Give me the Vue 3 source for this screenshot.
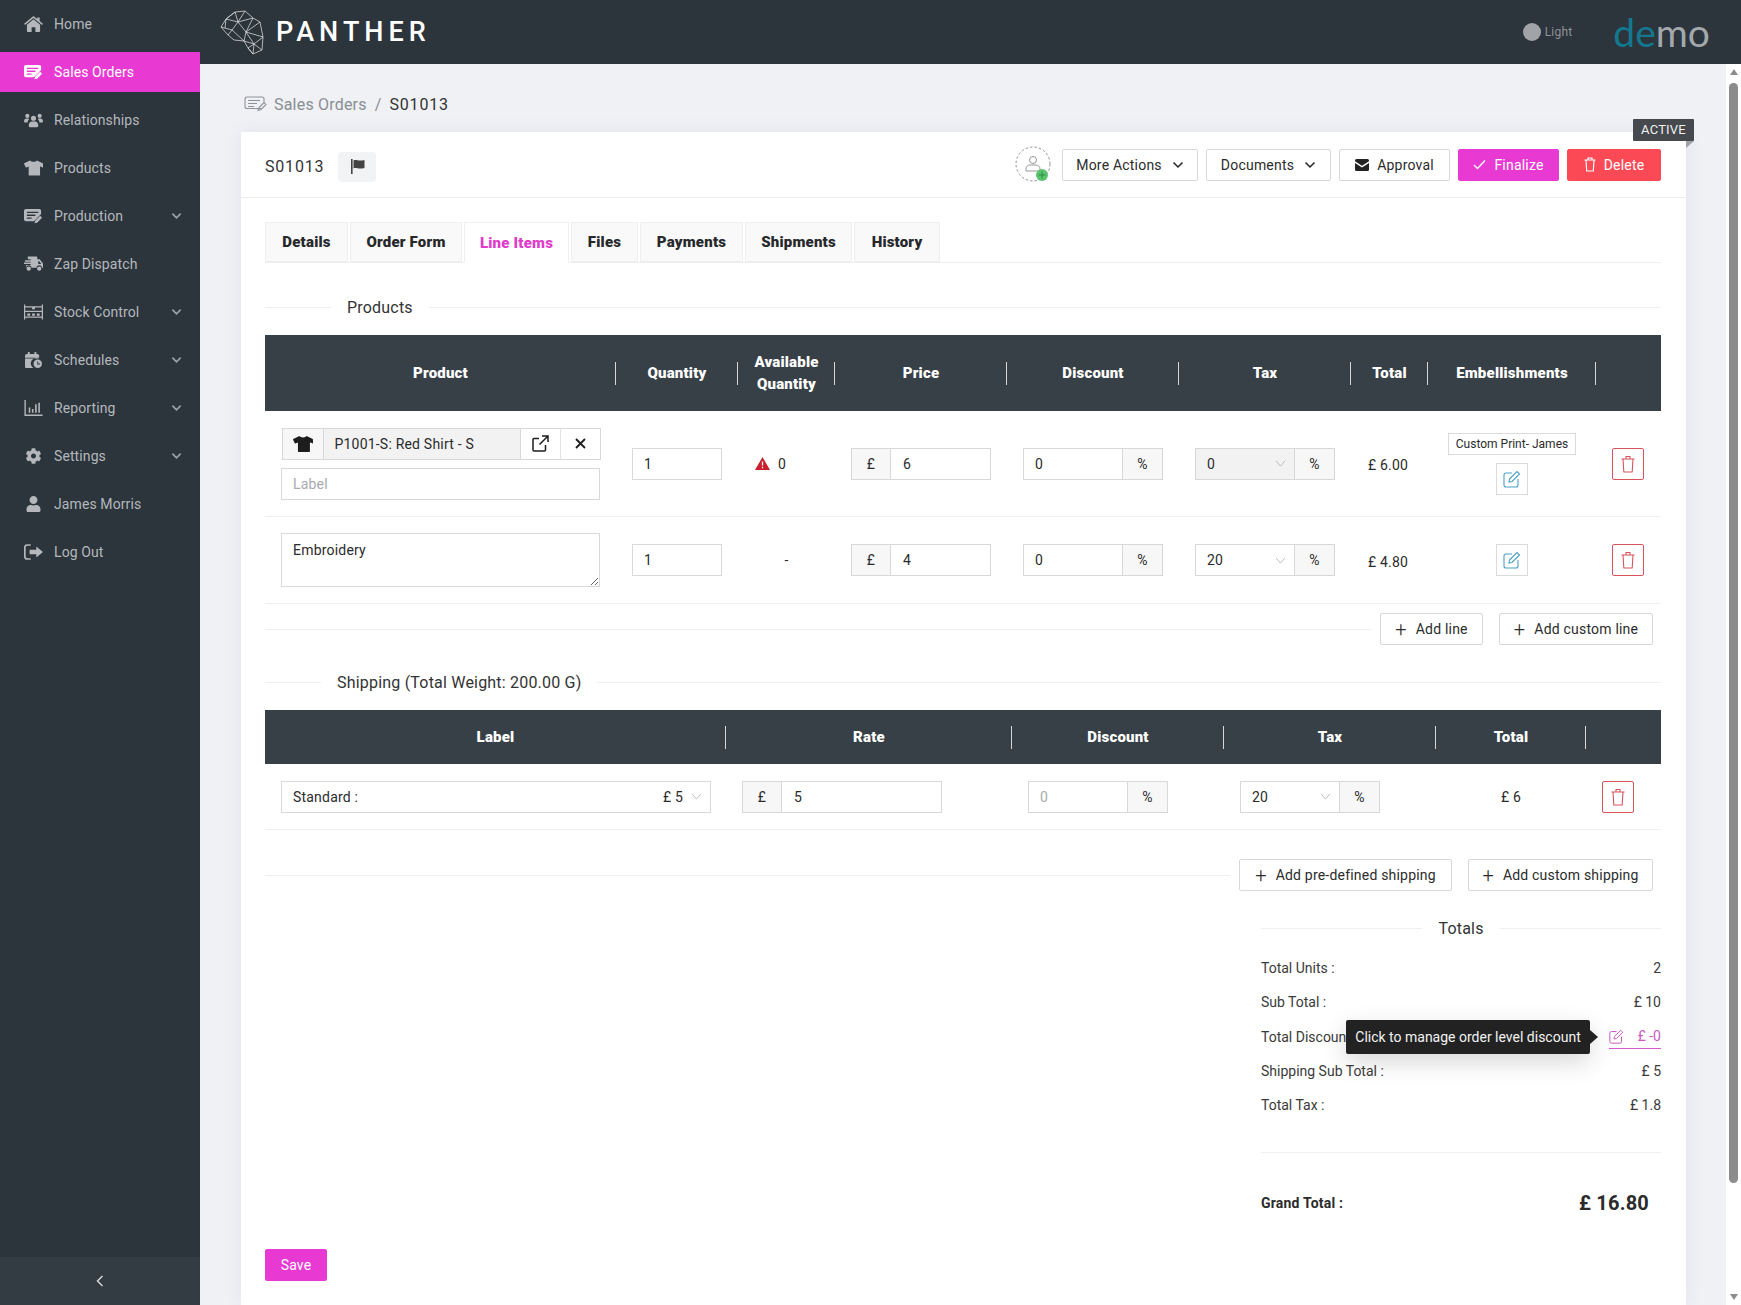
<template>
  <div class="app">
    <aside class="sidebar">
      <nav class="nav">
        <a v-for="item in navItems" :key="item.label" class="nav-item" :class="{ active: item.active }">
          <svg class="nav-icon" :viewBox="icons[item.icon].box"><path :d="icons[item.icon].d" fill="currentColor" fill-rule="evenodd" /></svg>
          <span class="nav-label">{{ item.label }}</span>
          <svg v-if="item.sub" class="nav-chevron" viewBox="0 0 12 8"><path d="M1.5 1.5 6 6l4.500-4.500" /></svg>
        </a>
      </nav>
      <div class="collapse-bar">
        <svg width="10" height="12" viewBox="0 0 10 12"><path d="M7.500 1 2.500 6l5 5" fill="none" stroke="#d5d8db" stroke-width="1.500" /></svg>
      </div>
    </aside>

    <div class="right">
      <header class="topbar">
        <div class="brand">
          <svg class="logo" width="44" height="45" viewBox="0 0 44 45" fill="none" stroke="#d4d6d8" stroke-width=".8">
            <path d="M1 17 6 9l9-7 10-1 8 7 7 4 3 15-1 13-9 4-5-6-4-7-10-1-6-5Z" />
            <path d="M15 2l3 10 7-11M18 12l15-4M6 9l12 3-6 8-11-3M12 20l-4 5M12 20l12 11M18 12l8 10-2 9M33 8l-7 14 14-10M26 22l17 5M26 22l8 12 9-7M34 34l8 6M34 34l-1 10M34 34l-6 4M24 31l10 3M6 9l-1 9M15 2 6 9M28 38l5 6" />
          </svg>
          <span class="brand-name">PANTHER</span>
        </div>
        <div class="top-right">
          <div class="theme-toggle"><i class="theme-dot"></i><span>Light</span></div>
          <div class="demo"><span class="demo-de">de</span>mo</div>
        </div>
      </header>

      <div class="body-row">
        <main class="content">
          <div class="breadcrumb">
            <svg width="23" height="16" viewBox="0 0 23 16" fill="none" stroke="#8f9397" stroke-width="1.100">
              <path d="M17 12.500H3a2 2 0 0 1-2-2V3a2 2 0 0 1 2-2h15a2 2 0 0 1 2 2v3" />
              <path d="M4 4.500h12M4 7.500h9M4 10.500h6M14 14.500l1-3 5-5 2 2-5 5Z" />
            </svg>
            <span class="crumb-link">Sales Orders</span>
            <span class="crumb-sep">/</span>
            <span class="crumb-current">S01013</span>
          </div>

          <section class="card">
            <div class="status-tag">ACTIVE</div>
            <div class="card-head">
              <div class="order-no">S01013</div>
              <button class="flag-btn">
                <svg width="15" height="15" viewBox="0 0 15 15"><path d="M1 0h1.600v15H1zM3.500 1.500C6 0 8 2.500 14.500 1v8C8 10.500 6 8 3.500 9.500z" fill="#444" /></svg>
              </button>
              <div class="head-actions">
                <svg class="avatar" width="36" height="38" viewBox="0 0 36 38" fill="none">
                  <circle cx="18" cy="18" r="17" stroke="#777" stroke-width=".8" stroke-dasharray="2.500 2" />
                  <circle cx="18" cy="14" r="3.500" stroke="#999" />
                  <path d="M11 25v-2c0-2.500 2-4 4-4h6c2 0 4 1.500 4 4v2Z" stroke="#999" />
                  <circle cx="27" cy="29" r="6" fill="#5ac46e" />
                  <path d="M27 25.500v7M23.500 29h7" stroke="#2d8f45" />
                </svg>
                <button class="btn act-more">More Actions <svg class="chev" viewBox="0 0 12 8"><path d="M1.500 1.500 6 6l4.500-4.500" /></svg></button>
                <button class="btn act-docs">Documents <svg class="chev" viewBox="0 0 12 8"><path d="M1.500 1.500 6 6l4.500-4.500" /></svg></button>
                <button class="btn act-approval">
                  <svg width="14" height="12" viewBox="0 0 14 12"><path d="M1.500 0h11A1.500 1.500 0 0 1 14 1.500v.7L7 6.800 0 2.200v-.7A1.500 1.500 0 0 1 1.500 0ZM0 4l7 4.600L14 4v6.500a1.500 1.500 0 0 1-1.500 1.500h-11A1.500 1.500 0 0 1 0 10.500Z" fill="#222" /></svg>
                  Approval
                </button>
                <button class="btn btn-pink act-finalize">
                  <svg width="13" height="11" viewBox="0 0 13 11" fill="none"><path d="M1 6l3.500 3.500L12 1.500" stroke="#fff" stroke-width="1.400" /></svg>
                  Finalize
                </button>
                <button class="btn btn-red act-delete">
                  <svg width="12" height="15" viewBox="0 0 12 15" fill="none" stroke="#fff" stroke-width="1.200"><path d="M.5 3h11M4 3V1h4v2M2 3l.7 11h6.600L10 3" /></svg>
                  Delete
                </button>
              </div>
            </div>

            <div class="card-body">
              <div class="tabs">
                <div
                  v-for="tab in tabs"
                  :key="tab.name"
                  class="tab"
                  :class="{ current: tab.name === 'Line Items' }"
                  :style="{ width: tab.width + 'px' }"
                >{{ tab.name }}</div>
              </div>

              <div class="legend legend-first"><i class="rule rule-start"></i><span>Products</span><i class="rule"></i></div>

              <div class="grid grid-products table-head tall">
                <div v-for="h in productHead" :key="h" class="th" v-html="h"></div>
                <div></div>
              </div>

              <div class="grid grid-products row">
                <div class="cell cell-product">
                  <div class="product-pick">
                    <span class="pick-icon">
                      <svg width="20" height="16" viewBox="0 0 640 512"><path :d="icons.shirt.d" fill="#1d1d1d" /></svg>
                    </span>
                    <span class="pick-name">P1001-S: Red Shirt - S</span>
                    <span class="pick-action">
                      <svg width="17" height="17" viewBox="0 0 17 17" fill="none" stroke="#1d1d1d" stroke-width="1.500"><path d="M13.500 10v5a1 1 0 0 1-1 1H2a1 1 0 0 1-1-1V4.500a1 1 0 0 1 1-1h5M10 1h6v6M16 1 7.500 9.500" /></svg>
                    </span>
                    <span class="pick-action">
                      <svg width="11" height="11" viewBox="0 0 11 11" fill="none" stroke="#1d1d1d" stroke-width="1.800"><path d="M1 1l9 9M10 1l-9 9" /></svg>
                    </span>
                  </div>
                  <input class="input" placeholder="Label" />
                </div>
                <div class="cell"><input class="input" value="1" /></div>
                <div class="cell cell-center stock">
                  <svg width="15" height="13" viewBox="0 0 15 13"><path d="M7.500 0 15 13H0Z" fill="#c9202e" /><path d="M7.500 4.500v4M7.500 9.700v1.500" stroke="#fff" stroke-width="1.300" /></svg>
                  <span>0</span>
                </div>
                <div class="cell cell-price"><span class="addon">£</span><input class="input joined" value="6" /></div>
                <div class="cell cell-price"><input class="input joined-r" value="0" /><span class="addon addon-r">%</span></div>
                <div class="cell cell-price">
                  <div class="select disabled">0<svg class="sel-chev" viewBox="0 0 12 8"><path d="M1 1l5 6 5-6" /></svg></div>
                  <span class="addon addon-r">%</span>
                </div>
                <div class="cell cell-total">£ 6.00</div>
                <div class="cell cell-emb">
                  <span class="emb-tag">Custom Print- James</span>
                  <button class="square-btn"><svg width="18" height="18" viewBox="0 0 18 18" fill="none" stroke="#4d9fc6" stroke-width="1.100"><path d="M9 3H3a2 2 0 0 0-2 2v10a2 2 0 0 0 2 2h10a2 2 0 0 0 2-2V9M6.500 9 14 1.500 16.500 4 9 11.500l-3 .5Z" /></svg></button>
                </div>
                <div class="cell cell-center cell-del">
                  <button class="square-btn danger"><svg width="14" height="18" viewBox="0 0 14 18" fill="none" stroke="#d8545c" stroke-width="1.100"><path d="M.5 4h13M5 4V1.500h4V4M2 4l.8 13h8.400L12 4" /></svg></button>
                </div>
              </div>

              <div class="grid grid-products row row-b">
                <div class="cell cell-product"><textarea class="input area">Embroidery</textarea></div>
                <div class="cell"><input class="input" value="1" /></div>
                <div class="cell cell-center">-</div>
                <div class="cell cell-price"><span class="addon">£</span><input class="input joined" value="4" /></div>
                <div class="cell cell-price"><input class="input joined-r" value="0" /><span class="addon addon-r">%</span></div>
                <div class="cell cell-price">
                  <div class="select">20<svg class="sel-chev" viewBox="0 0 12 8"><path d="M1 1l5 6 5-6" /></svg></div>
                  <span class="addon addon-r">%</span>
                </div>
                <div class="cell cell-total">£ 4.80</div>
                <div class="cell cell-center">
                  <button class="square-btn"><svg width="18" height="18" viewBox="0 0 18 18" fill="none" stroke="#4d9fc6" stroke-width="1.100"><path d="M9 3H3a2 2 0 0 0-2 2v10a2 2 0 0 0 2 2h10a2 2 0 0 0 2-2V9M6.500 9 14 1.500 16.500 4 9 11.500l-3 .5Z" /></svg></button>
                </div>
                <div class="cell cell-center cell-del">
                  <button class="square-btn danger"><svg width="14" height="18" viewBox="0 0 14 18" fill="none" stroke="#d8545c" stroke-width="1.100"><path d="M.5 4h13M5 4V1.500h4V4M2 4l.8 13h8.400L12 4" /></svg></button>
                </div>
              </div>

              <div class="add-row add-lines">
                <i class="rule"></i>
                <button class="btn add-btn add-line"><span class="plus">+</span>Add line</button>
                <button class="btn add-btn add-custom"><span class="plus">+</span>Add custom line</button>
              </div>

              <div class="legend legend-ship"><i class="rule rule-ship"></i><span>Shipping (Total Weight: 200.00 G)</span><i class="rule"></i></div>

              <div class="grid grid-ship table-head">
                <div v-for="h in shipHead" :key="h" class="th">{{ h }}</div>
                <div></div>
              </div>

              <div class="grid grid-ship row row-ship">
                <div class="cell cell-ship-label">
                  <div class="select wide"><span>Standard :</span><span class="sel-price">£ 5</span><svg class="sel-chev" viewBox="0 0 12 8"><path d="M1 1l5 6 5-6" /></svg></div>
                </div>
                <div class="cell cell-left"><span class="addon">£</span><input class="input joined rate" value="5" /></div>
                <div class="cell cell-left"><input class="input joined-r fixed muted" placeholder="0" /><span class="addon addon-r">%</span></div>
                <div class="cell cell-left">
                  <div class="select fixed">20<svg class="sel-chev" viewBox="0 0 12 8"><path d="M1 1l5 6 5-6" /></svg></div>
                  <span class="addon addon-r">%</span>
                </div>
                <div class="cell cell-center">£ 6</div>
                <div class="cell cell-left">
                  <button class="square-btn danger"><svg width="14" height="18" viewBox="0 0 14 18" fill="none" stroke="#d8545c" stroke-width="1.100"><path d="M.5 4h13M5 4V1.500h4V4M2 4l.8 13h8.400L12 4" /></svg></button>
                </div>
              </div>

              <div class="add-row add-ship">
                <i class="rule"></i>
                <button class="btn add-btn add-predefined"><span class="plus">+</span>Add pre-defined shipping</button>
                <button class="btn add-btn add-custom-ship"><span class="plus">+</span>Add custom shipping</button>
              </div>

              <div class="totals">
                <div class="legend legend-totals"><i class="rule"></i><span>Totals</span><i class="rule"></i></div>
                <div class="total-rows">
                  <div v-for="t in totals" :key="t.label" class="total-row">
                    <span>{{ t.label }}</span>
                    <span v-if="!t.discount">{{ t.value }}</span>
                    <template v-else>
                      <span class="discount-link">
                        <svg width="15" height="15" viewBox="0 0 18 18" fill="none" stroke="#c95cc0" stroke-width="1.200"><path d="M9 3H3a2 2 0 0 0-2 2v10a2 2 0 0 0 2 2h10a2 2 0 0 0 2-2V9M6.500 9 14 1.500 16.500 4 9 11.500l-3 .5Z" /></svg>
                        {{ t.value }}
                      </span>
                      <div class="tooltip">Click to manage order level discount</div>
                    </template>
                  </div>
                </div>
                <div class="grand">
                  <span class="grand-label">Grand Total :</span>
                  <span class="grand-value">£ 16.80</span>
                </div>
              </div>

              <button class="save">Save</button>
            </div>
          </section>
        </main>

        <div class="rail">
          <i class="rail-up"></i>
          <i class="rail-thumb"></i>
          <i class="rail-down"></i>
        </div>
      </div>
    </div>
  </div>
</template>

<script setup>
const icons = {
  home: {
    box: '0 0 20 17',
    d: 'M10 0 14 3.300V1.500h2.500v3.900L20 8.300l-1 1.200-9-7.400-9 7.400-1-1.200ZM10 3.500l7 5.800V16a1 1 0 0 1-1 1h-4v-5H8v5H4a1 1 0 0 1-1-1V9.300Z'
  },
  order: {
    box: '0 0 20 15',
    d: 'M2 0h14a2 2 0 0 1 2 2v3.500L11 12.500 10.300 13H2a2 2 0 0 1-2-2V2a2 2 0 0 1 2-2ZM3 3v1.400h12V3ZM3 6v1.400h9V6ZM3 9v1.400h5V9ZM11 15l.8-2.500 5.200-5.200 2 2-5.200 5.200Z'
  },
  users: {
    box: '0 0 20 15',
    d: 'M10 3a2.700 2.700 0 1 1 0 5.400A2.700 2.700 0 0 1 10 3ZM3.500 1a2.200 2.200 0 1 1 0 4.400 2.200 2.200 0 0 1 0-4.400ZM16.500 1a2.200 2.200 0 1 1 0 4.400 2.200 2.200 0 0 1 0-4.400ZM0 9c0-1.600 1.200-3 2.700-3h1.500c.5 0 1 .2 1.400.5C4.500 7.400 3.900 8.500 3.800 10H1a1 1 0 0 1-1-1ZM20 9c0-1.600-1.200-3-2.700-3h-1.500c-.5 0-1 .2-1.400.5 1.100.9 1.700 2 1.800 3.500H19a1 1 0 0 0 1-1ZM5 13c0-2 1.700-3.800 3.500-3.800h3c1.800 0 3.500 1.800 3.500 3.800v.8c0 .7-.5 1.200-1.200 1.200H6.200C5.500 15 5 14.500 5 13.800Z'
  },
  shirt: {
    box: '0 0 640 512',
    d: 'M631.200 96.500L436.500 0C416.400 27.800 371.900 47.200 320 47.200S223.600 27.800 203.500 0L8.800 96.500c-7.900 4-11.100 13.600-7.200 21.500l57.200 114.500c4 7.900 13.600 11.100 21.500 7.200l56.600-27.700c9.400-4.600 20.500 2.200 20.500 12.800V480c0 17.700 14.300 32 32 32h320c17.700 0 32-14.300 32-32V220.800c0-10.600 11.100-17.400 20.500-12.800l56.600 27.700c7.900 4 17.500.8 21.500-7.200L638.300 118c4-7.900.8-17.600-7.100-21.500z'
  },
  truck: {
    box: '0 0 20 16',
    d: 'M4 0h9a1 1 0 0 1 1 1v2h2.500L20 7.500V12h-1.200a2.800 2.800 0 0 0-5.600 0H7.800a2.800 2.800 0 0 0-5.600 0H2V9h5V8H0V6.500h7v-1H1V4h6V3H4ZM15 5v3h3.300l-2.300-3ZM5 10.500a2.300 2.300 0 1 1 0 4.600 2.300 2.300 0 0 1 0-4.600ZM16 10.500a2.300 2.300 0 1 1 0 4.600 2.300 2.300 0 0 1 0-4.600Z'
  },
  stock: {
    box: '0 0 20 16',
    d: 'M0 0h1.300v2H18.700V0H20v16h-1.300v-2H1.300v2H0ZM1.300 3.300v3.400H18.700V3.300H11.500V5h-3V1h-.1v2.300ZM1.300 8v4.700H18.700V8ZM3.500 9.500h3V12h-3ZM8.500 9.500h3V12h-3ZM13.500 9.500h3V12h-3Z'
  },
  calendar: {
    box: '0 0 18 17',
    d: 'M3 0h2v2h5V0h2v2h1a2 2 0 0 1 2 2v2H0V4a2 2 0 0 1 2-2h1ZM0 7h15a5.500 5.500 0 0 0-6 10H1a1 1 0 0 1-1-1ZM13.500 8a4.500 4.500 0 1 1 0 9 4.500 4.500 0 0 1 0-9ZM13 10v3.300h3v-1h-2V10Z'
  },
  chart: {
    box: '0 0 17 15',
    d: 'M0 0h1.300v13.500H17V15H0ZM4 7h1.500v5H4ZM7 8.500h1.500V12H7ZM10 4h1.500v8H10ZM13 2.500h1.500V12H13Z'
  },
  gear: {
    box: '0 0 512 512',
    d: 'M487.400 315.700l-42.600-24.600c4.300-23.200 4.300-47 0-70.200l42.600-24.600c4.900-2.800 7.100-8.600 5.500-14-11.100-35.600-30-67.800-54.700-94.600-3.800-4.100-10-5.100-14.800-2.300L380.800 110c-17.900-15.400-38.500-27.300-60.800-35.100V25.800c0-5.600-3.900-10.500-9.400-11.700-36.700-8.200-74.300-7.800-109.200 0-5.500 1.200-9.400 6.100-9.400 11.700V75c-22.200 7.900-42.800 19.800-60.800 35.100L88.700 85.500c-4.900-2.800-11-1.900-14.800 2.300-24.700 26.700-43.600 58.900-54.700 94.600-1.700 5.400.6 11.200 5.500 14L67.300 221c-4.300 23.200-4.300 47 0 70.200l-42.600 24.600c-4.900 2.800-7.100 8.600-5.500 14 11.100 35.600 30 67.800 54.700 94.600 3.800 4.100 10 5.100 14.800 2.300l42.600-24.600c17.900 15.400 38.500 27.300 60.800 35.100v49.200c0 5.600 3.900 10.500 9.400 11.700 36.700 8.200 74.300 7.800 109.200 0 5.500-1.200 9.400-6.100 9.400-11.700v-49.200c22.200-7.900 42.800-19.800 60.800-35.100l42.600 24.600c4.900 2.800 11 1.900 14.800-2.300 24.700-26.700 43.600-58.900 54.700-94.600 1.500-5.500-.7-11.300-5.600-14.100zM256 336c-44.100 0-80-35.900-80-80s35.900-80 80-80 80 35.900 80 80-35.900 80-80 80z'
  },
  user: {
    box: '0 0 448 512',
    d: 'M224 256c70.700 0 128-57.300 128-128S294.700 0 224 0 96 57.300 96 128s57.300 128 128 128zm89.600 32h-16.700c-22.200 10.200-46.900 16-72.900 16s-50.600-5.800-72.900-16h-16.700C60.200 288 0 348.200 0 422.400V464c0 26.500 21.500 48 48 48h352c26.500 0 48-21.500 48-48v-41.600c0-74.200-60.200-134.400-134.400-134.400z'
  },
  logout: {
    box: '0 0 17 14',
    d: 'M3 0h3v1.500H3A1.500 1.500 0 0 0 1.500 3v8A1.500 1.500 0 0 0 3 12.500h3V14H3a3 3 0 0 1-3-3V3a3 3 0 0 1 3-3ZM11 2l6 5-6 5V9H5V5h6Z'
  }
}

const navItems = [
  { label: 'Home', icon: 'home' },
  { label: 'Sales Orders', icon: 'order', active: true },
  { label: 'Relationships', icon: 'users' },
  { label: 'Products', icon: 'shirt' },
  { label: 'Production', icon: 'order', sub: true },
  { label: 'Zap Dispatch', icon: 'truck' },
  { label: 'Stock Control', icon: 'stock', sub: true },
  { label: 'Schedules', icon: 'calendar', sub: true },
  { label: 'Reporting', icon: 'chart', sub: true },
  { label: 'Settings', icon: 'gear', sub: true },
  { label: 'James Morris', icon: 'user' },
  { label: 'Log Out', icon: 'logout' }
]

const tabs = [
  { name: 'Details', width: 83 },
  { name: 'Order Form', width: 112 },
  { name: 'Line Items', width: 105 },
  { name: 'Files', width: 67 },
  { name: 'Payments', width: 103 },
  { name: 'Shipments', width: 107 },
  { name: 'History', width: 86 }
]

const productHead = ['Product', 'Quantity', 'Available<br>Quantity', 'Price', 'Discount', 'Tax', 'Total', 'Embellishments']
const shipHead = ['Label', 'Rate', 'Discount', 'Tax', 'Total']

const totals = [
  { label: 'Total Units :', value: '2' },
  { label: 'Sub Total :', value: '£ 10' },
  { label: 'Total Discount :', value: '£ -0', discount: true },
  { label: 'Shipping Sub Total :', value: '£ 5' },
  { label: 'Total Tax :', value: '£ 1.8' }
]
</script>

<style>
html,
body {
  margin: 0;
  overflow: hidden;
}
</style>

<style scoped>
.app {
  display: flex;
  width: 1741px;
  height: 1305px;
  overflow: hidden;
  font-family: Roboto, "Noto Sans", sans-serif;
  font-size: 14px;
  letter-spacing: 0.2px;
  color: #2b2b2b;
  background: #eff1f5;
}
button,
input,
textarea {
  font-family: inherit;
  letter-spacing: inherit;
}

/* sidebar */
.sidebar {
  width: 200px;
  flex: none;
  display: flex;
  flex-direction: column;
  background: #2c343c;
}
.nav {
  flex: 1;
  padding-top: 4px;
}
.nav-item {
  display: flex;
  align-items: center;
  height: 40px;
  margin-bottom: 8px;
  padding: 0 18px 0 24px;
  color: #b4b8bc;
  letter-spacing: 0.100px;
}
.nav-item.active {
  background: #e83ad3;
  color: #fff;
}
.nav-icon {
  width: 19px;
  height: 16px;
  flex: none;
}
.nav-label {
  margin-left: 11px;
  flex: 1;
}
.nav-chevron {
  width: 11px;
  height: 8px;
  fill: none;
  stroke: #9ea3a8;
  stroke-width: 1.800;
}
.collapse-bar {
  height: 48px;
  background: #333b43;
  display: flex;
  align-items: center;
  justify-content: center;
}

/* top bar */
.right {
  flex: 1;
  display: flex;
  flex-direction: column;
  min-width: 0;
}
.topbar {
  height: 64px;
  flex: none;
  display: flex;
  align-items: center;
  justify-content: space-between;
  background: #2c343c;
  padding: 0 31px 0 20px;
}
.brand {
  display: flex;
  align-items: center;
  gap: 12px;
}
.brand-name {
  color: #fff;
  font-size: 27px;
  font-weight: 500;
  letter-spacing: 5px;
  line-height: 1;
}
.top-right {
  display: flex;
  align-items: center;
  gap: 41px;
}
.theme-toggle {
  display: flex;
  align-items: center;
  gap: 4px;
  color: #8f9398;
  font-size: 12px;
}
.theme-dot {
  width: 18px;
  height: 18px;
  border-radius: 50%;
  background: #a0a3a7;
}
.demo {
  font-family: Lato, sans-serif;
  font-size: 39px;
  font-weight: 400;
  letter-spacing: 0;
  color: #a3a8ad;
  line-height: 1;
}
.demo-de {
  color: #13788f;
}

/* page body */
.body-row {
  flex: 1;
  display: flex;
  min-height: 0;
}
.content {
  flex: 1;
  padding: 0 40px 0 41px;
  min-width: 0;
}
.breadcrumb {
  height: 68px;
  display: flex;
  align-items: center;
  gap: 7px;
  padding: 12px 0 0 3px;
  box-sizing: border-box;
  font-size: 16px;
}
.crumb-link {
  color: #8a8e92;
}
.crumb-sep {
  color: #8a8e92;
  margin: 0 1px;
}
.crumb-current {
  color: #333;
  letter-spacing: 0.800px;
}
.rail {
  width: 15px;
  flex: none;
  background: #fff;
  display: flex;
  flex-direction: column;
  align-items: center;
}
.rail-up,
.rail-down {
  width: 0;
  height: 0;
  border-left: 4px solid transparent;
  border-right: 4px solid transparent;
}
.rail-up {
  margin-top: 5px;
  border-bottom: 6px solid #8c8c8c;
}
.rail-thumb {
  width: 9px;
  height: 1100px;
  margin-top: 8px;
  border-radius: 5px;
  background: #8c8c8c;
}
.rail-down {
  margin-top: auto;
  margin-bottom: 5px;
  border-top: 6px solid #8c8c8c;
}

/* card */
.card {
  position: relative;
  background: #fff;
  height: 1173px;
  box-shadow: 0 0 16px rgba(60, 70, 90, 0.08);
}
.status-tag {
  position: absolute;
  top: -13px;
  right: -8px;
  width: 61px;
  height: 22px;
  line-height: 22px;
  text-align: center;
  background: #46494d;
  color: #f1f1f1;
  font-size: 13px;
  border-radius: 1px;
}
.status-tag::after {
  content: "";
  position: absolute;
  right: 0;
  top: 22px;
  border-top: 7px solid #9fa3a7;
  border-right: 8px solid transparent;
}
.card-head {
  height: 66px;
  box-sizing: border-box;
  border-bottom: 1px solid #ebedef;
  display: flex;
  align-items: center;
  padding: 0 25px 0 24px;
}
.order-no {
  font-size: 16px;
  color: #333;
  letter-spacing: 0.800px;
  margin-top: 4px;
}
.flag-btn {
  margin: 4px 0 0 14px;
  width: 38px;
  height: 30px;
  border: 0;
  border-radius: 4px;
  background: #f2f3f5;
  display: flex;
  align-items: center;
  justify-content: center;
  padding: 0;
}
.head-actions {
  margin-left: auto;
  display: flex;
  align-items: center;
  gap: 8px;
}
.avatar {
  margin-right: 3px;
}
.btn {
  height: 32px;
  box-sizing: border-box;
  display: inline-flex;
  align-items: center;
  justify-content: center;
  gap: 8px;
  padding: 0;
  border: 1px solid #d6d8da;
  border-radius: 2px;
  background: #fff;
  color: #2b2b2b;
  font-size: 14px;
  white-space: nowrap;
}
.act-more {
  width: 136px;
}
.act-docs {
  width: 125px;
}
.act-approval {
  width: 111px;
}
.act-finalize {
  width: 101px;
}
.act-delete {
  width: 94px;
}
.chev {
  width: 12px;
  height: 8px;
  fill: none;
  stroke: #222;
  stroke-width: 1.500;
  margin-left: 2px;
}
.btn-pink {
  background: #e83ad3;
  border-color: #e83ad3;
  color: #fff;
}
.btn-red {
  background: #fb4a56;
  border-color: #fb4a56;
  color: #fff;
}
.card-body {
  padding: 24px 25px 0 24px;
}

/* tabs */
.tabs {
  display: flex;
  gap: 2px;
  border-bottom: 1px solid #eceef0;
  height: 40px;
}
.tab {
  height: 40px;
  box-sizing: border-box;
  display: flex;
  align-items: center;
  justify-content: center;
  background: #f9f9fa;
  border: 1px solid #eeeff1;
  border-bottom-color: #eceef0;
  font-weight: 900;
  font-size: 15px;
  color: #26282a;
}
.tab.current {
  background: #fff;
  border-bottom-color: #fff;
  height: 41px;
  color: #e03ccc;
}

/* section legends */
.legend {
  display: flex;
  align-items: center;
  height: 30px;
  font-size: 16px;
  color: #333;
}
.legend span {
  padding: 0 16px;
}
.rule {
  flex: 1;
  display: block;
  height: 1px;
  background: #eeeff1;
}
.rule-start {
  flex: none;
  width: 66px;
}
.rule-ship {
  flex: none;
  width: 56px;
}
.legend-first {
  margin-top: 29px;
}
.legend-ship {
  margin-top: 22px;
}

/* tables */
.grid {
  display: grid;
}
.grid-products {
  grid-template-columns: 351px 122px 97px 172px 172px 172px 77px 168px 65px;
}
.grid-ship {
  grid-template-columns: 461px 286px 212px 212px 150px 75px;
}
.table-head {
  margin-top: 13px;
  height: 54px;
  background: #373f47;
  color: #fff;
}
.table-head.tall {
  height: 76px;
}
.th {
  display: flex;
  align-items: center;
  justify-content: center;
  text-align: center;
  font-weight: 900;
  font-size: 15px;
  line-height: 22px;
  background: linear-gradient(#d5d7d9, #d5d7d9) right center / 1px 23px no-repeat;
}
.row {
  border-bottom: 1px solid #eeeff1;
  height: 106px;
  box-sizing: border-box;
}
.row-b {
  height: 87px;
}
.row-ship {
  height: 66px;
}
.cell {
  display: flex;
  align-items: center;
  padding: 0 16px;
  min-width: 0;
}
.cell-product {
  flex-direction: column;
  justify-content: center;
  gap: 8px;
  padding: 0 16px;
}
.cell-center {
  justify-content: center;
  padding: 0;
}
.cell-del {
  padding-right: 2px;
}
.cell-left {
  padding: 0 0 0 16px;
}
.cell-ship-label {
  padding: 0 15px 0 16px;
}
.cell-total {
  padding: 0 0 0 17px;
  padding-top: 3px;
}
.cell-emb {
  flex-direction: column;
  justify-content: center;
  gap: 8px;
  padding: 0;
}
.stock {
  gap: 8px;
  padding-right: 32px;
}
.input {
  display: block;
  width: 100%;
  height: 32px;
  box-sizing: border-box;
  border: 1px solid #d6d8da;
  background: #fff;
  padding: 0 11px;
  font-size: 14px;
  color: #2b2b2b;
  outline: none;
  min-width: 0;
  border-radius: 0;
}
.input::placeholder {
  color: #a8abae;
}
.joined {
  flex: 1;
  border-left: 0;
  padding: 0 12px;
}
.joined-r {
  flex: 1;
}
.input.rate {
  flex: none;
  width: 160px;
}
.input.fixed,
.select.fixed {
  flex: none;
  width: 100px;
}
.area {
  height: 54px;
  padding: 8px 11px;
  resize: vertical;
}
.addon {
  flex: none;
  width: 40px;
  height: 32px;
  box-sizing: border-box;
  display: flex;
  align-items: center;
  justify-content: center;
  background: #f7f7f8;
  border: 1px solid #d6d8da;
}
.addon-r {
  border-left: 0;
}
.select {
  flex: 1;
  height: 32px;
  box-sizing: border-box;
  border: 1px solid #d6d8da;
  display: flex;
  align-items: center;
  padding: 0 8px 0 11px;
  background: #fff;
}
.select.disabled {
  background: #f2f2f3;
}
.select.wide {
  width: 100%;
}
.sel-chev {
  width: 11px;
  height: 7px;
  margin-left: auto;
  fill: none;
  stroke: #b4b7ba;
}
.sel-price {
  margin-left: auto;
  margin-right: 8px;
}
.sel-price + .sel-chev {
  margin-left: 0;
}
.muted {
  color: #aaa;
}

/* product picker */
.product-pick {
  display: flex;
  width: 100%;
  height: 32px;
  box-sizing: border-box;
  border: 1px solid #d6d8da;
  margin-left: 1px;
}
.pick-icon {
  width: 40px;
  display: flex;
  align-items: center;
  justify-content: center;
  background: #f7f7f8;
  border-right: 1px solid #d6d8da;
}
.pick-name {
  flex: 1;
  display: flex;
  align-items: center;
  padding-left: 11px;
  background: #f2f2f3;
  border-right: 1px solid #d6d8da;
}
.pick-action {
  width: 39px;
  display: flex;
  align-items: center;
  justify-content: center;
  background: #fff;
}
.pick-action + .pick-action {
  border-left: 1px solid #e2e3e5;
}
.emb-tag {
  height: 22px;
  box-sizing: border-box;
  padding: 0 7px;
  border: 1px solid #d9dbdd;
  display: flex;
  align-items: center;
  font-size: 12px;
  letter-spacing: 0;
  white-space: nowrap;
}
.square-btn {
  width: 32px;
  height: 32px;
  padding: 0;
  background: #fff;
  border: 1px solid #d9dbdd;
  display: flex;
  align-items: center;
  justify-content: center;
}
.square-btn.danger {
  border-color: #d8545c;
  border-radius: 2px;
}

/* add rows */
.add-row {
  display: flex;
  align-items: center;
}
.add-lines {
  margin-top: 9px;
  padding-right: 8px;
}
.add-ship {
  margin-top: 29px;
  padding-right: 8px;
}
.add-btn {
  gap: 0;
  flex: none;
}
.plus {
  font-size: 20px;
  font-weight: 300;
  margin-right: 9px;
  line-height: 1;
}
.add-line {
  width: 103px;
  margin-left: 9px;
}
.add-custom {
  width: 154px;
  margin-left: 16px;
}
.add-predefined {
  width: 213px;
  margin-left: 9px;
}
.add-custom-ship {
  width: 185px;
  margin-left: 16px;
}

/* totals */
.totals {
  width: 400px;
  margin: 22px 0 0 auto;
}
.total-rows {
  margin-top: 8px;
  padding-bottom: 30px;
  border-bottom: 1px solid #eeeff1;
}
.total-row {
  position: relative;
  height: 34.250px;
  display: flex;
  align-items: center;
  justify-content: space-between;
  color: #3a3a3a;
  letter-spacing: 0;
}
.discount-link {
  display: flex;
  align-items: center;
  justify-content: space-between;
  width: 52px;
  height: 24px;
  border-bottom: 1px solid #d65bcc;
  color: #c95cc0;
}
.tooltip {
  position: absolute;
  right: 71px;
  top: 0;
  width: 244px;
  height: 34px;
  line-height: 34px;
  text-align: center;
  background: #222;
  color: #f2f2f2;
  border-radius: 2px;
  font-size: 14px;
  letter-spacing: 0;
  box-shadow: 0 8px 24px rgba(0, 0, 0, 0.16);
}
.tooltip::after {
  content: "";
  position: absolute;
  right: -8px;
  top: 10px;
  border-left: 8px solid #222;
  border-top: 7px solid transparent;
  border-bottom: 7px solid transparent;
}
.grand {
  height: 100px;
  display: flex;
  align-items: center;
  justify-content: space-between;
  padding-right: 12px;
}
.grand-label {
  font-weight: 700;
}
.grand-value {
  font-size: 20px;
  font-weight: 700;
}
.save {
  display: block;
  width: 62px;
  height: 32px;
  margin-top: -4px;
  border: 0;
  border-radius: 2px;
  background: #e83ad3;
  color: #fff;
  font-size: 14px;
}
</style>
